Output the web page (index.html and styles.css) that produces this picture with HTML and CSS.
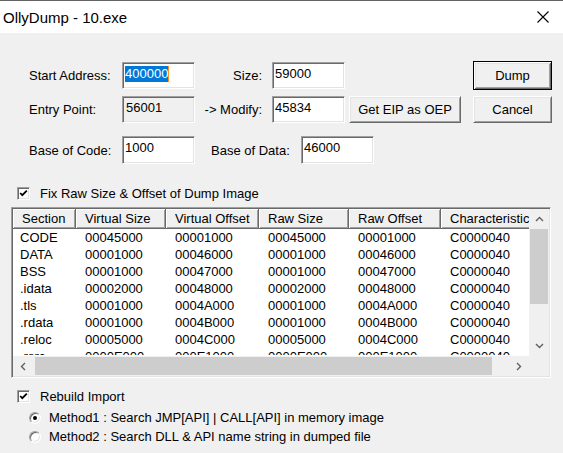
FILE: index.html
```html
<!DOCTYPE html>
<html lang="en">
<head>
<meta charset="utf-8">
<title>OllyDump - 10.exe</title>
<link rel="stylesheet" href="styles.css">
</head>
<body>
<div class="titlebar">
  <span class="title">OllyDump - 10.exe</span>
  <svg class="close" viewBox="0 0 12 12" width="12" height="12"><path d="M0.5 0.5 L11.5 11.5 M11.5 0.5 L0.5 11.5" stroke="#000" stroke-width="1.1" fill="none"/></svg>
</div>
<div class="client">
  <div class="fields">
    <div class="label">Start Address:</div>
    <div class="edit"><span class="sel">400000</span></div>
    <div class="label label-r">Size:</div>
    <div class="edit">59000</div>
    <div class="spacer"></div>
    <div class="btn btn-default btn-dump">Dump</div>

    <div class="label">Entry Point:</div>
    <div class="edit readonly">56001</div>
    <div class="label label-r">-&gt; Modify:</div>
    <div class="edit">45834</div>
    <div class="btn btn-eip">Get EIP as OEP</div>
    <div class="btn btn-cancel">Cancel</div>
  </div>

  <div class="row3">
    <div class="label lbl-code">Base of Code:</div>
    <div class="edit">1000</div>
    <div class="label lbl-data">Base of Data:</div>
    <div class="edit">46000</div>
  </div>

  <div class="check-row fix">
    <span class="checkbox"><svg viewBox="0 0 11 11" width="11" height="11"><polyline points="2.2,5 4.3,7.2 8.8,2.6" fill="none" stroke="#000" stroke-width="1.8"/></svg></span>
    <span>Fix Raw Size &amp; Offset of Dump Image</span>
  </div>

  <div class="listview">
    <div class="lv-main">
      <div class="lv-content">
        <div class="lv-header">
          <div class="hcell">Section</div>
          <div class="hcell">Virtual Size</div>
          <div class="hcell">Virtual Offset</div>
          <div class="hcell">Raw Size</div>
          <div class="hcell">Raw Offset</div>
          <div class="hcell">Characteristics</div>
        </div>
        <div class="lv-body">
          <div class="lv-row"><span>CODE</span><span>00045000</span><span>00001000</span><span>00045000</span><span>00001000</span><span>C0000040</span></div>
          <div class="lv-row"><span>DATA</span><span>00001000</span><span>00046000</span><span>00001000</span><span>00046000</span><span>C0000040</span></div>
          <div class="lv-row"><span>BSS</span><span>00001000</span><span>00047000</span><span>00001000</span><span>00047000</span><span>C0000040</span></div>
          <div class="lv-row"><span>.idata</span><span>00002000</span><span>00048000</span><span>00002000</span><span>00048000</span><span>C0000040</span></div>
          <div class="lv-row"><span>.tls</span><span>00001000</span><span>0004A000</span><span>00001000</span><span>0004A000</span><span>C0000040</span></div>
          <div class="lv-row"><span>.rdata</span><span>00001000</span><span>0004B000</span><span>00001000</span><span>0004B000</span><span>C0000040</span></div>
          <div class="lv-row"><span>.reloc</span><span>00005000</span><span>0004C000</span><span>00005000</span><span>0004C000</span><span>C0000040</span></div>
          <div class="lv-row"><span>.rsrc</span><span>0000E000</span><span>000E1000</span><span>0000E000</span><span>000E1000</span><span>C0000040</span></div>
        </div>
      </div>
      <div class="vscroll">
        <div class="sb-btn"><svg viewBox="0 0 9 6" width="9" height="6"><polyline points="1,5 4.5,1.5 8,5" fill="none" stroke="#606060" stroke-width="1.4"/></svg></div>
        <div class="vthumb"></div>
        <div class="vtrack"></div>
        <div class="sb-btn"><svg viewBox="0 0 9 6" width="9" height="6"><polyline points="1,1 4.5,4.5 8,1" fill="none" stroke="#606060" stroke-width="1.4"/></svg></div>
      </div>
    </div>
    <div class="lv-bottom">
      <div class="hscroll">
        <div class="sb-btn"><svg viewBox="0 0 6 9" width="6" height="9"><polyline points="5,1 1.5,4.5 5,8" fill="none" stroke="#606060" stroke-width="1.4"/></svg></div>
        <div class="htrack"><div class="hthumb"></div></div>
        <div class="sb-btn"><svg viewBox="0 0 6 9" width="6" height="9"><polyline points="1,1 4.5,4.5 1,8" fill="none" stroke="#606060" stroke-width="1.4"/></svg></div>
      </div>
      <div class="corner"></div>
    </div>
  </div>

  <div class="check-row rebuild">
    <span class="checkbox"><svg viewBox="0 0 11 11" width="11" height="11"><polyline points="2.2,5 4.3,7.2 8.8,2.6" fill="none" stroke="#000" stroke-width="1.8"/></svg></span>
    <span>Rebuild Import</span>
  </div>
  <div class="radio-row m1">
    <span class="radio on"></span>
    <span>Method1 : Search JMP[API] | CALL[API] in memory image</span>
  </div>
  <div class="radio-row m2">
    <span class="radio"></span>
    <span>Method2 : Search DLL &amp; API name string in dumped file</span>
  </div>
</div>
</body>
</html>
```

FILE: styles.css
```css
* { box-sizing: border-box; }
html, body { margin: 0; padding: 0; }
body {
  width: 563px;
  height: 453px;
  overflow: hidden;
  background: #f0f0f0;
  font-family: "Liberation Sans", Arial, sans-serif;
  font-size: 13px;
  color: #000;
  border-top: 1px solid #646464;
}

.titlebar {
  height: 32px;
  background: #fff;
  display: flex;
  align-items: center;
  justify-content: space-between;
  padding: 0 14px 0 3px;
}
.title { font-size: 15px; }
.close { display: block; }

.client { padding-top: 29px; }

.fields {
  display: grid;
  grid-template-columns: 93px 73px 77px 73px 116px 91px;
  grid-template-rows: 27px 27px;
  row-gap: 7px;
  padding-left: 29px;
  align-items: center;
}
.label { white-space: nowrap; }
.label-r { text-align: right; padding-right: 10px; }

.edit {
  height: 27px;
  border: 1px solid;
  border-color: #a0a0a0 #fff #fff #a0a0a0;
  box-shadow: inset 1px 1px #696969, inset -1px -1px #e3e3e3;
  background: #fff;
  padding: 2px 0 0 2px;
  line-height: 17px;
  white-space: nowrap;
  overflow: hidden;
}
.edit.readonly { background: #f0f0f0; padding-left: 3px; }
.sel {
  background: #0078d7;
  color: #fff;
  border-right: 1px solid #ff8a24;
  padding-bottom: 1px;
}

.btn {
  height: 27px;
  display: flex;
  align-items: center;
  justify-content: center;
  background: #f0f0f0;
  border: 1px solid;
  border-color: #fff #696969 #696969 #fff;
  box-shadow: inset 1px 1px #e3e3e3, inset -1px -1px #a0a0a0;
  white-space: nowrap;
}
.btn-default {
  height: 29px;
  border: 1px solid #000;
  box-shadow: inset 1px 1px #fff, inset -1px -1px #696969, inset 2px 2px #e3e3e3, inset -2px -2px #a0a0a0;
}
.btn-dump { width: 79px; margin-left: 12px; }
.btn-eip { width: 112px; margin-left: 4px; }
.btn-cancel { width: 79px; margin-left: 12px; }

.row3 {
  display: flex;
  align-items: center;
  height: 28px;
  margin-top: 13px;
  padding-left: 29px;
}
.row3 .edit { width: 73px; height: 28px; }
.lbl-code { width: 93px; }
.lbl-data { width: 90px; margin-left: 16px; }

.check-row {
  display: flex;
  align-items: center;
  height: 17px;
  padding-left: 17px;
  gap: 10px;
}
.fix { margin-top: 21px; }
.rebuild { margin-top: 10px; }
.checkbox {
  width: 13px;
  height: 13px;
  border: 1px solid;
  border-color: #a0a0a0 #fff #fff #a0a0a0;
  box-shadow: inset 1px 1px #696969, inset -1px -1px #e3e3e3;
  background: #fff;
  display: flex;
}
.checkbox svg { display: block; }

.listview {
  margin: 5px 0 0 11px;
  width: 540px;
  border: 1px solid;
  border-color: #a0a0a0 #fff #fff #a0a0a0;
  box-shadow: inset 1px 1px #696969, inset -1px -1px #e3e3e3;
  padding: 1px;
  background: #fff;
}
.lv-main { display: flex; height: 147px; }
.lv-content { width: 516px; overflow: hidden; background: #fff; }
.lv-header, .lv-row {
  display: grid;
  grid-template-columns: 63px 90px 93px 90px 92px 120px;
}
.lv-header { height: 20px; }
.hcell {
  background: #f0f0f0;
  padding-left: 9px;
  line-height: 19px;
  border-right: 1px solid #696969;
  border-bottom: 1px solid #696969;
  box-shadow: inset 1px 1px #fff, inset -1px -1px #a0a0a0;
  white-space: nowrap;
  overflow: hidden;
}
.lv-body { height: 126px; overflow: hidden; }
.lv-row { height: 17px; line-height: 17px; }
.lv-row span { padding-left: 9px; white-space: nowrap; }
.lv-row span:first-child { padding-left: 7px; }

.vscroll {
  width: 20px;
  display: flex;
  flex-direction: column;
  background: #f0f0f0;
}
.sb-btn {
  height: 20px;
  width: 20px;
  display: flex;
  align-items: center;
  justify-content: center;
  flex: none;
}
.sb-btn svg { display: block; }
.vthumb { height: 75px; margin: 0 1px; background: #cdcdcd; }
.vtrack { flex: 1; }

.lv-bottom { display: flex; height: 20px; }
.hscroll { width: 516px; display: flex; background: #f0f0f0; }
.htrack { flex: 1; padding: 1px 0 1px 2px; }
.hthumb { width: 457px; height: 18px; background: #cdcdcd; }
.corner { width: 20px; background: #f0f0f0; }

.radio-row {
  display: flex;
  align-items: center;
  height: 17px;
  padding-left: 29px;
  gap: 8px;
}
.m1 { margin-top: 4px; }
.m2 { margin-top: 2px; }
.radio {
  width: 12px;
  height: 12px;
  border-radius: 50%;
  border: 1px solid;
  border-color: #a0a0a0 #fff #fff #a0a0a0;
  box-shadow: inset 1px 1px #696969, inset -1px -1px #e3e3e3;
  background: #fff;
  display: flex;
  align-items: center;
  justify-content: center;
}
.radio.on::after {
  content: "";
  width: 4px;
  height: 4px;
  border-radius: 50%;
  background: #000;
}
```
